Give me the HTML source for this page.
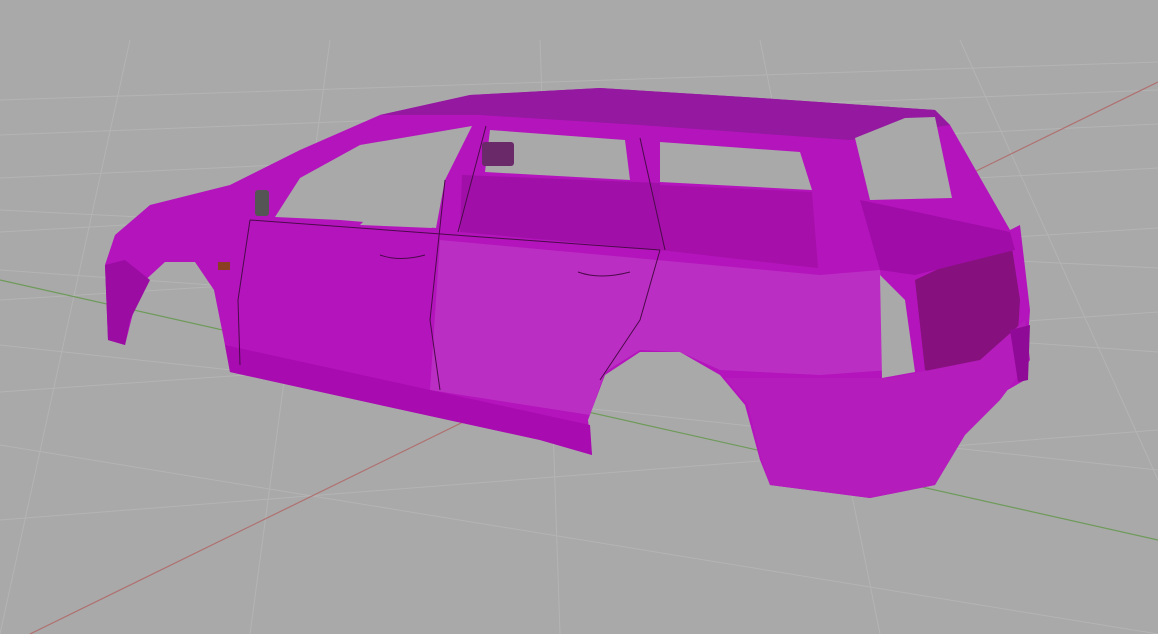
<!DOCTYPE html>
<html><head><meta charset="utf-8"><style>html,body{margin:0;padding:0;background:#a9a9a9;overflow:hidden}svg{display:block}</style></head><body>
<svg width="1158" height="634" viewBox="0 0 1158 634" xmlns="http://www.w3.org/2000/svg">
<rect width="1158" height="634" fill="#a9a9a9"/>
<g stroke="#b4b4b4" stroke-width="1" fill="none">
<path d="M0 100 L1158 62 M0 135 L1158 90 M0 178 L1158 124 M0 232 L1158 168 M0 300 L1158 228 M0 392 L1158 312 M0 520 L1158 430"/>
<path d="M0 210 L1158 268 M0 270 L1158 352 M0 345 L1158 470 M0 445 L1158 634"/>
<path d="M130 40 L0 634 M330 40 L250 634 M540 40 L560 634 M760 40 L880 634 M960 40 L1158 480"/>
</g>
<path d="M30 634 L1158 82" stroke="#b07070" stroke-width="1.2"/>
<path d="M0 280 L1158 540" stroke="#6e9a5a" stroke-width="1.2"/>
<path d="M115 235 L150 205 L230 185 L300 150 L380 115 L470 95 L600 88 L760 98 L935 110 L950 125 L1010 230 L1020 225 L1030 310 L1025 380 L990 400 L960 440 L935 485 L870 498 L770 485 L760 460 L745 405 L720 375 L680 352 L640 352 L605 375 L588 420 L592 455 L540 440 L380 405 L230 372 L224 340 L214 290 L195 262 L165 262 L140 285 L125 345 L108 340 L105 265 Z" fill="#b414bc"/>
<path d="M380 115 L470 95 L600 88 L760 98 L935 110 L950 125 L850 140 L640 125 L480 115 Z" fill="#9418a0"/>
<path d="M915 280 L1010 235 L1020 300 L1015 380 L990 395 L925 370 Z" fill="#86107e"/>
<path d="M440 240 L820 275 L880 270 L890 370 L820 375 L720 370 L680 352 L640 350 L605 372 L590 415 L430 390 Z" fill="#c040c8" opacity="0.6"/>
<g fill="#a9a9a9">
<path d="M275 217 L300 178 L360 145 L472 126 L445 180 L436 228 L340 220 Z"/>
<path d="M490 130 L625 140 L630 180 L485 172 Z"/>
<path d="M660 142 L800 152 L812 190 L660 182 Z"/>
<path d="M855 138 L905 118 L935 117 L952 198 L870 200 Z"/>
<path d="M880 275 L905 300 L915 372 L882 378 Z"/>
<path d="M360 225 L380 205 L410 200 L432 228 Z"/>
</g>
<path d="M462 175 L660 183 L660 250 L460 232 Z" fill="#a010a8"/>
<path d="M660 185 L812 192 L818 268 L790 265 L660 250 Z" fill="#a60faa"/>
<path d="M860 200 L1010 232 L1015 250 L915 275 L880 270 Z" fill="#a00ca8"/>
<path d="M225 345 L590 425 L592 455 L540 440 L380 405 L230 372 Z" fill="#a80cb0"/>
<path d="M725 378 L890 378 L980 360 L1025 320 L1030 360 L1000 400 L965 435 L935 485 L870 498 L770 485 L760 455 L748 405 Z" fill="#b41cbc"/>
<g stroke="#4a0a4a" stroke-width="1" fill="none">
<path d="M250 220 L238 300 L240 365"/>
<path d="M445 180 L430 320 L440 390"/>
<path d="M660 250 L640 320 L600 380"/>
<path d="M486 126 L458 232"/>
<path d="M640 138 L665 250"/>
<path d="M250 220 L660 250"/>
<path d="M380 255 Q400 262 425 255"/>
<path d="M578 272 Q600 280 630 272"/>
</g>
<rect x="482" y="142" width="32" height="24" fill="#6a2a6a" rx="3"/>
<rect x="255" y="190" width="14" height="26" fill="#555" rx="3"/>
<rect x="218" y="262" width="12" height="8" fill="#8a4020"/>
<path d="M105 265 L125 260 L150 280 L130 320 L125 345 L108 340 Z" fill="#9a0ca2"/>
<path d="M1010 330 L1030 325 L1028 380 L1018 382 Z" fill="#900a98"/>
</svg>
</body></html>
